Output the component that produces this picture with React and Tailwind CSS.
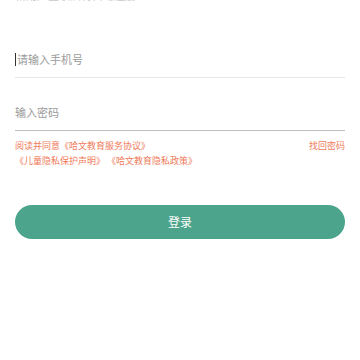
export default function App() {
  return (
    <div className="h-[360px] w-[360px] overflow-hidden bg-white px-[15px] font-['Noto_Sans_CJK_SC',sans-serif]">
      <p className="-mt-[12px] text-[11px] leading-[14px] text-[#c8c8c8]">新用户登录后将自动注册</p>

      <div className="mt-[44px] flex h-[32px] items-center border-b border-[#e6e6e6] pb-[5px]">
        <span className="mr-[1px] h-[13px] w-[1px] bg-[#333]" />
        <span className="text-[11px] text-[#9a9a9a]">请输入手机号</span>
      </div>

      <div className="mt-[21px] flex h-[32px] items-center border-b border-[#bdbdbd] pb-[4px]">
        <span className="text-[11px] text-[#9a9a9a]">输入密码</span>
      </div>

      <div className="mt-[7px] flex justify-between text-[9px] leading-[15px] text-[#f07a5a]">
        <div>
          <p>阅读并同意《哈文教育服务协议》</p>
          <p>《儿童隐私保护声明》 《哈文教育隐私政策》</p>
        </div>
        <p>找回密码</p>
      </div>

      <button className="mt-[37px] flex h-[34px] w-full items-center justify-center rounded-full bg-[#4ba48b] text-[12px] text-white">
        登录
      </button>
    </div>
  )
}
